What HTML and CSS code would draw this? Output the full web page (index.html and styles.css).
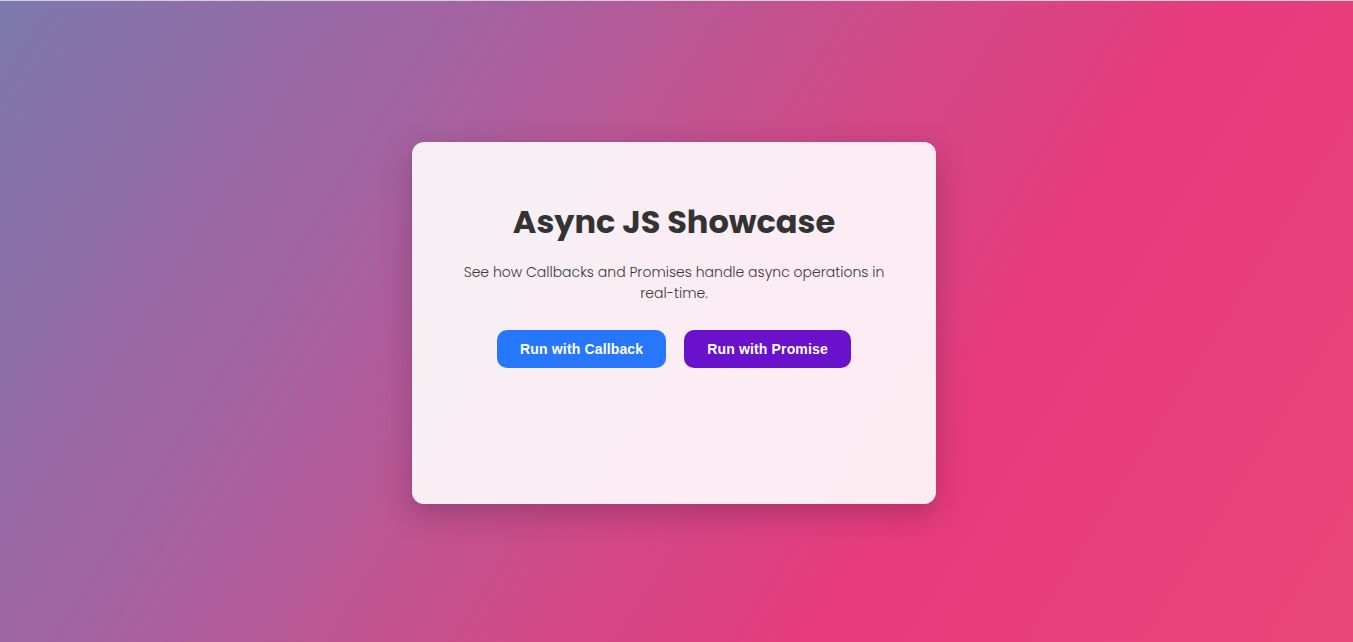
FILE: index.html
```html
<!DOCTYPE html>
<html lang="en">
<head>
<meta charset="utf-8">
<title>Async JS Showcase</title>
<link rel="stylesheet" href="styles.css">
</head>
<body>
  <main class="page">
    <section class="card">
      <h1 class="title">Async JS Showcase</h1>
      <p class="subtitle">See how Callbacks and Promises handle async operations in real-time.</p>
      <div class="actions">
        <button class="btn btn-callback">Run with Callback</button>
        <button class="btn btn-promise">Run with Promise</button>
      </div>
      <div class="output"></div>
    </section>
  </main>
</body>
</html>
```
FILE: styles.css
```css
* { box-sizing: border-box; }
html, body { height: 100%; }
body {
  margin: 0;
  border-top: 1px solid #cfcfd4;
  font-family: "Poppins", "Inter", "Noto Sans", sans-serif;
  background: linear-gradient(122deg, #7c79ae 0%, #a8619f 30%, #d04a88 52%, #e73b7c 70%, #e8467a 100%);
  color: #333;
}
.page {
  height: 100%;
  display: flex;
  align-items: center;
  justify-content: center;
  padding: 2px 5px 0 0;
}
.card {
  width: 524px;
  height: 362px;
  background: rgba(255, 255, 255, 0.9);
  border-radius: 12px;
  box-shadow: 0 10px 30px rgba(60, 20, 60, 0.3);
  padding: 60px 40px 40px;
  text-align: center;
}
.title {
  margin: 0;
  font-size: 32px;
  font-weight: 700;
  line-height: 40px;
  color: #333;
}
.subtitle {
  margin: 20px 0 0;
  font-size: 14px;
  font-weight: 300;
  line-height: 21px;
  color: #3a3a3a;
}
.actions {
  margin-top: 26px;
  display: flex;
  justify-content: center;
  gap: 18px;
}
.btn {
  border: none;
  border-radius: 10px;
  height: 38px;
  padding: 0 23px;
  font-family: "Liberation Sans", Arial, sans-serif;
  font-weight: 700;
  font-size: 14px;
  letter-spacing: 0.15px;
  color: #fff;
  cursor: pointer;
}
.btn-callback { background: #2777fe; }
.btn-promise { background: #6a11cb; }
.output { min-height: 40px; }
```
